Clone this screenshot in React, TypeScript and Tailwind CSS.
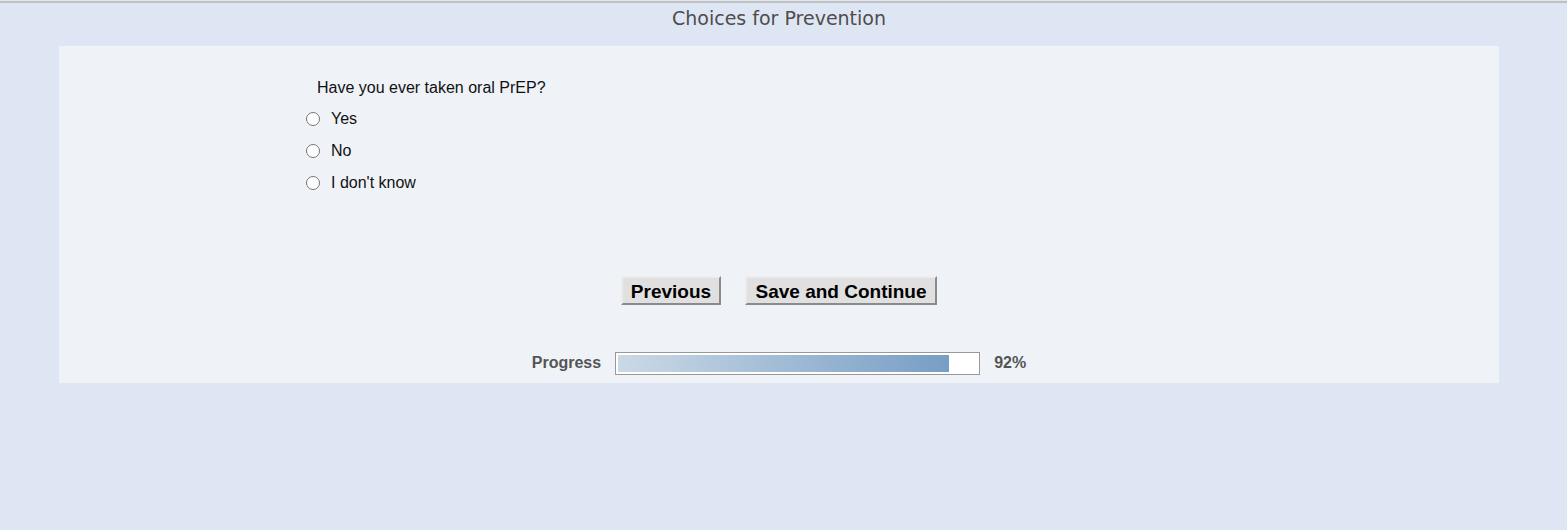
import { useState } from "react";

const options = ["Yes", "No", "I don't know"];

export default function App() {
  const [answer, setAnswer] = useState<string | null>(null);
  const progress = 92;

  return (
    <main className="min-h-[530px] bg-[#dfe6f3] font-['Liberation_Sans',Arial,sans-serif]">
      <div className="h-px" />
      <div className="h-[2px] bg-[#c0c0c0]" />

      <div className="ml-[59px] w-[1440px]">
        <h1 className="h-[43px] pt-[1px] text-center font-['DejaVu_Sans',Tahoma,sans-serif] text-[19px] text-[#4d4d4d]">
          Choices for Prevention
        </h1>

        <section className="bg-[#eff3f8] pb-[8px] pt-[30px]">
          <fieldset className="ml-[245px]">
            <legend className="ml-[13px] text-[16px] text-[#111]">Have you ever taken oral PrEP?</legend>
            <div className="mt-[9px] flex flex-col gap-[13px]">
              {options.map((option) => (
                <label className="flex h-[19px] items-center text-[16px] text-[#111]" key={option}>
                  <input
                    checked={answer === option}
                    className="m-0 ml-[2px] mr-[11px] size-[14px] accent-[#555]"
                    name="oral-prep"
                    onChange={() => setAnswer(option)}
                    type="radio"
                  />
                  {option}
                </label>
              ))}
            </div>
          </fieldset>

          <div className="mt-[84px] flex justify-center gap-[24px]">
            <button className="h-[29px] w-[100px] border-2 border-b-[#8a8a8a] border-l-[#ececec] border-r-[#8a8a8a] border-t-[#ececec] bg-[#e0e0e0] text-[19px] font-bold text-black">
              Previous
            </button>
            <button className="h-[29px] w-[192px] border-2 border-b-[#8a8a8a] border-l-[#ececec] border-r-[#8a8a8a] border-t-[#ececec] bg-[#e0e0e0] text-[19px] font-bold text-black">
              Save and Continue
            </button>
          </div>

          <div className="mt-[46px] flex items-center justify-center gap-[14px] text-[16px] font-bold text-[#555]">
            <span>Progress</span>
            <div className="h-[23px] w-[365px] border border-[#999] bg-white p-[2px]">
              <div
                className="h-full bg-gradient-to-r from-[#cbd9e6] to-[#779ec5]"
                style={{ width: `${(331 / 359) * 100}%` }}
              />
            </div>
            <span>{progress}%</span>
          </div>
        </section>
      </div>
    </main>
  );
}
